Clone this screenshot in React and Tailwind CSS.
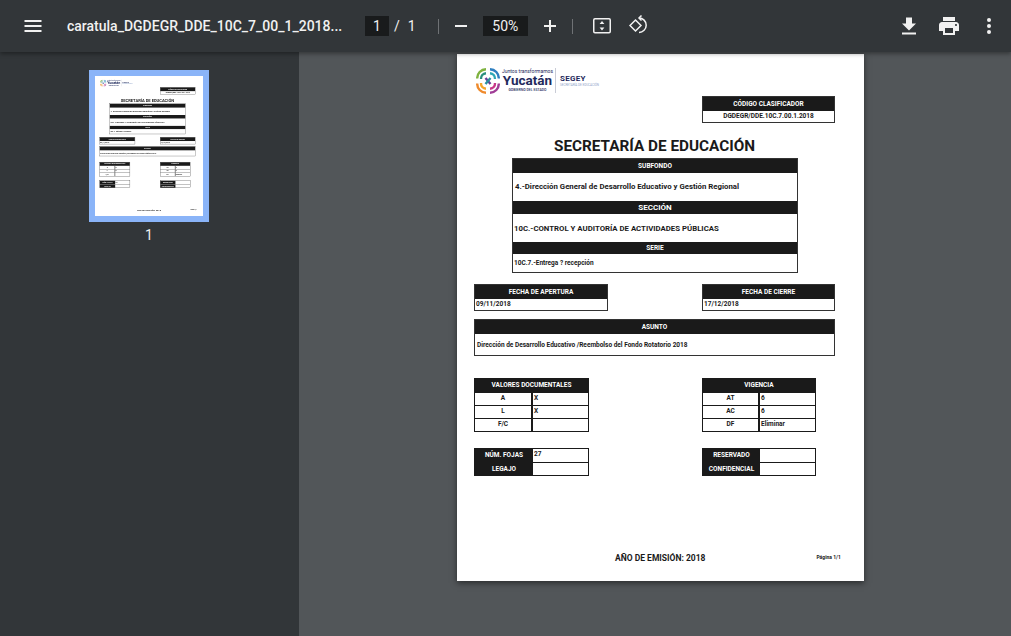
const Bar = ({ children, className = '' }) => (
  <div className={`bg-[#1a1a1a] text-white text-center font-bold flex items-center justify-center leading-none ${className}`}>
    {children}
  </div>
);

function LogoMark() {
  return (
    <svg width="24" height="26" viewBox="0 0 24 26" fill="none" strokeWidth="2.4">
      <path d="M1.2 10.5 A9 9 0 0 1 10 1.2" stroke="#7fb23f" />
      <path d="M5 11 A5.5 5.5 0 0 1 10 5.2" stroke="#2a8f7d" />
      <path d="M14 1.2 A9 9 0 0 1 22.8 10.5" stroke="#2f7fc0" />
      <path d="M14 5.2 A5.5 5.5 0 0 1 19 11" stroke="#2fa7b5" />
      <path d="M1.2 15.5 A9 9 0 0 0 10 24.8" stroke="#ef8a2c" />
      <path d="M5 15 A5.5 5.5 0 0 0 10 20.8" stroke="#f4a62a" />
      <path d="M14 24.8 A9 9 0 0 0 22.8 15.5" stroke="#a03c96" />
      <path d="M14 20.8 A5.5 5.5 0 0 0 19 15" stroke="#c8388a" />
      <path d="M9.5 10 L14.5 16" stroke="#6a3f9a" strokeWidth="2.4" />
      <path d="M14.5 10 L9.5 16" stroke="#2a8f9d" strokeWidth="2.4" />
    </svg>
  );
}

function DocPage() {
  return (
    <div className="w-[407px] h-[527px] bg-white text-[#1a1a1a] flex flex-col relative font-['Roboto',sans-serif]">
      {/* logo */}
      <div className="flex items-center h-[31px] mt-[11px] ml-[19px]">
        <LogoMark />
        <div className="ml-[3px] w-[49px] flex flex-col items-center text-[#1f2a5c]">
          <span className="text-[5px] leading-[6px] whitespace-nowrap">Juntos transformamos</span>
          <span className="text-[13.5px] leading-[13px] font-bold whitespace-nowrap">Yucatán</span>
          <span className="text-[3.5px] leading-[6px] font-medium whitespace-nowrap">GOBIERNO DEL ESTADO</span>
        </div>
        <div className="w-px h-[25px] bg-[#c9ccd6] ml-[3px]" />
        <div className="ml-[4px] flex flex-col text-[#1f2a5c]">
          <span className="text-[8px] leading-[9px] font-bold tracking-[0.3px]">SEGEY</span>
          <span className="text-[3px] leading-[5px] text-[#8fa3c9] whitespace-nowrap">SECRETARÍA DE EDUCACIÓN</span>
        </div>
      </div>

      {/* codigo */}
      <div className="self-end mr-[29px] w-[133px] h-[27px] border border-[#333] flex flex-col">
        <Bar className="h-[14px] text-[6.5px]">CÓDIGO CLASIFICADOR</Bar>
        <div className="flex-1 flex items-center justify-center text-[6.5px] font-bold">DGDEGR/DDE.10C.7.00.1.2018</div>
      </div>

      <h1 className="ml-[97px] mt-[13px] h-[20px] leading-[20px] text-[15.3px] font-bold whitespace-nowrap">SECRETARÍA DE EDUCACIÓN</h1>

      {/* subfondo */}
      <div className="ml-[55px] mt-[2px] w-[286px] h-[115px] border border-[#333] flex flex-col">
        <Bar className="h-[14px] text-[6.5px]">SUBFONDO</Bar>
        <div className="h-[28px] flex items-center pl-[2px] text-[7.8px] font-bold">4.-Dirección General de Desarrollo Educativo y Gestión Regional</div>
        <Bar className="h-[13px] text-[8px]">SECCIÓN</Bar>
        <div className="h-[28px] pt-[1px] flex items-center pl-[1px] text-[7.8px] font-bold">10C.-CONTROL Y AUDITORÍA DE ACTIVIDADES PÚBLICAS</div>
        <Bar className="h-[12px] text-[6.5px]">SERIE</Bar>
        <div className="flex-1 pt-[1px] flex items-center pl-[1px] text-[6.5px] font-bold">10C.7.-Entrega ? recepción</div>
      </div>

      {/* fechas */}
      <div className="flex justify-between ml-[17px] mr-[29px] mt-[11px]">
        <div className="w-[134px] h-[27px] border border-[#333] flex flex-col">
          <Bar className="h-[14px] text-[6.5px]">FECHA DE APERTURA</Bar>
          <div className="flex-1 pt-[1px] flex items-center pl-[1px] text-[6.5px] font-bold">09/11/2018</div>
        </div>
        <div className="w-[133px] h-[27px] border border-[#333] flex flex-col">
          <Bar className="h-[14px] text-[6.5px]">FECHA DE CIERRE</Bar>
          <div className="flex-1 pt-[1px] flex items-center pl-[1px] text-[6.5px] font-bold">17/12/2018</div>
        </div>
      </div>

      {/* asunto */}
      <div className="ml-[17px] mr-[29px] mt-[8px] h-[37px] border border-[#333] flex flex-col">
        <Bar className="h-[14px] text-[6.5px]">ASUNTO</Bar>
        <div className="flex-1 pt-[2px] flex items-center pl-[2px] text-[6.5px] font-bold">Dirección de Desarrollo Educativo /Reembolso del Fondo Rotatorio 2018</div>
      </div>

      {/* valores / vigencia */}
      <div className="flex justify-between ml-[17px] mr-[48px] mt-[22px]">
        <div className="w-[115px] h-[54px] flex flex-col border border-[#1a1a1a]">
          <Bar className="h-[13px] text-[6.5px]">VALORES DOCUMENTALES</Bar>
          {[['A', 'X'], ['L', 'X'], ['F/C', '']].map(([k, v]) => (
            <div key={k} className="flex-1 flex border-t border-[#1a1a1a] text-[6.5px] font-bold">
              <div className="w-[58px] flex items-center justify-center border-r-2 border-[#1a1a1a]">{k}</div>
              <div className="flex-1 flex items-center pl-[1px]">{v}</div>
            </div>
          ))}
        </div>
        <div className="w-[114px] h-[54px] flex flex-col border border-[#1a1a1a]">
          <Bar className="h-[13px] text-[6.5px]">VIGENCIA</Bar>
          {[['AT', '6'], ['AC', '6'], ['DF', 'Eliminar']].map(([k, v]) => (
            <div key={k} className="flex-1 flex border-t border-[#1a1a1a] text-[6.5px] font-bold">
              <div className="w-[57px] flex items-center justify-center border-r-2 border-[#1a1a1a]">{k}</div>
              <div className="flex-1 flex items-center pl-[1px]">{v}</div>
            </div>
          ))}
        </div>
      </div>

      {/* fojas / reservado */}
      <div className="flex justify-between ml-[17px] mr-[48px] mt-[16px]">
        <div className="w-[115px] h-[28px] flex flex-col border border-[#1a1a1a]">
          {[['NÚM. FOJAS', '27'], ['LEGAJO', '']].map(([k, v], i) => (
            <div key={k} className={`flex-1 flex text-[6.5px] font-bold ${i ? 'border-t border-[#1a1a1a]' : ''}`}>
              <Bar className="w-[58px]">{k}</Bar>
              <div className="flex-1 flex items-center pl-[1px]">{v}</div>
            </div>
          ))}
        </div>
        <div className="w-[114px] h-[28px] flex flex-col border border-[#1a1a1a]">
          {[['RESERVADO', ''], ['CONFIDENCIAL', '']].map(([k, v], i) => (
            <div key={k} className={`flex-1 flex text-[6.5px] font-bold ${i ? 'border-t border-[#1a1a1a]' : ''}`}>
              <Bar className="w-[57px]">{k}</Bar>
              <div className="flex-1 flex items-center pl-[2px]">{v}</div>
            </div>
          ))}
        </div>
      </div>

      {/* pie */}
      <div className="flex items-center mt-[76px] ml-[158px] h-[12px]">
        <span className="text-[8.5px] font-bold whitespace-nowrap">AÑO DE EMISIÓN: 2018</span>
        <span className="ml-[111px] text-[5px] font-bold whitespace-nowrap">Página 1/1</span>
      </div>
    </div>
  );
}

function IconBtn({ children, className = '' }) {
  return <div className={`w-[24px] h-[24px] flex items-center justify-center text-[#f1f1f1] ${className}`}>{children}</div>;
}

export default function App() {
  return (
    <div className="w-[1011px] h-[636px] overflow-hidden flex flex-col bg-[#525659] font-['Roboto',sans-serif]">
      {/* toolbar */}
      <div className="h-[52px] shrink-0 bg-[#323639] flex items-center text-[#f1f1f1] shadow-[0_2px_4px_rgba(0,0,0,0.35)] relative z-10">
        <IconBtn className="ml-[21px]">
          <svg width="24" height="24" viewBox="0 0 24 24" fill="currentColor"><path d="M3.5 6h17v2h-17zM3.5 11h17v2h-17zM3.5 16h17v2h-17z" /></svg>
        </IconBtn>
        <div className="ml-[22px] w-[278px] text-[14px] font-medium whitespace-nowrap">caratula_DGDEGR_DDE_10C_7_00_1_2018...</div>
        <div className="ml-[20px] w-[24px] h-[20px] bg-[#191b1c] flex items-center justify-center text-[14px]">1</div>
        <span className="ml-[5px] text-[14px]">/</span>
        <span className="ml-[8px] text-[14px] w-[8px]">1</span>
        <div className="ml-[22px] w-px h-[15px] bg-[#6f7275]" />
        <IconBtn className="ml-[10px]">
          <svg width="24" height="24" viewBox="0 0 24 24" fill="currentColor"><path d="M6 11h12v2H6z" /></svg>
        </IconBtn>
        <div className="ml-[10px] w-[45px] h-[20px] bg-[#191b1c] flex items-center justify-center text-[14px]">50%</div>
        <IconBtn className="ml-[10px]">
          <svg width="24" height="24" viewBox="0 0 24 24" fill="currentColor"><path d="M18 13h-5v5h-2v-5H6v-2h5V6h2v5h5z" /></svg>
        </IconBtn>
        <div className="ml-[10px] w-px h-[15px] bg-[#6f7275]" />
        <IconBtn className="ml-[17px]">
          <svg width="20" height="20" viewBox="0 0 20 20" fill="none" stroke="currentColor" strokeWidth="1.5"><rect x="1.75" y="2.75" width="16.5" height="14" rx="1.2" /><path d="M10 5l2.4 3H7.6zM10 14.5l2.4-3H7.6z" fill="currentColor" stroke="none" /></svg>
        </IconBtn>
        <IconBtn className="ml-[13px]">
          <svg width="22" height="22" viewBox="0 0 22 22" fill="none" stroke="currentColor" strokeWidth="1.5"><path d="M13.5 0.5L11 3l2.5 2.5" /><path d="M11 3a7.2 7.2 0 1 1 0 14.4" /><path d="M2 10.5l5.5-5.5 5.5 5.5-5.5 5.5z" /></svg>
        </IconBtn>
        <IconBtn className="ml-[246px]">
          <svg width="24" height="24" viewBox="0 0 24 24" fill="currentColor"><path d="M19 9.5h-4v-6H9v6H5l7 7zM5 18.5v2h14v-2z" /></svg>
        </IconBtn>
        <IconBtn className="ml-[16px]">
          <svg width="24" height="24" viewBox="0 0 24 24" fill="currentColor"><path d="M19 8H5c-1.66 0-3 1.34-3 3v6h4v4h12v-4h4v-6c0-1.66-1.34-3-3-3zm-3 11H8v-5h8v5zm3-7c-.55 0-1-.45-1-1s.45-1 1-1 1 .45 1 1-.45 1-1 1zm-1-9H6v4h12V3z" /></svg>
        </IconBtn>
        <IconBtn className="ml-[16px]">
          <svg width="24" height="24" viewBox="0 0 24 24" fill="currentColor"><circle cx="12" cy="6" r="2" /><circle cx="12" cy="12" r="2" /><circle cx="12" cy="18" r="2" /></svg>
        </IconBtn>
      </div>

      <div className="flex-1 flex min-h-0">
        {/* sidebar */}
        <div className="w-[299px] shrink-0 bg-[#323639] flex flex-col items-center pt-[18px] pr-[1px]">
          <div className="w-[120px] h-[152px] bg-[#8ab4f8] p-[6px]">
            <div className="w-[108px] h-[140px] overflow-hidden bg-white">
              <div className="origin-top-left scale-[0.2654] w-[407px] h-[527px] blur-[0.5px]">
                <DocPage />
              </div>
            </div>
          </div>
          <span className="mt-[5px] text-[14px] leading-[16px] text-[#f1f1f1]">1</span>
        </div>

        {/* document */}
        <div className="flex-1 flex justify-center items-start pt-[2px] pl-[11px]">
          <div className="shadow-[0_2px_6px_rgba(0,0,0,0.5)]">
            <DocPage />
          </div>
        </div>
      </div>
    </div>
  );
}
